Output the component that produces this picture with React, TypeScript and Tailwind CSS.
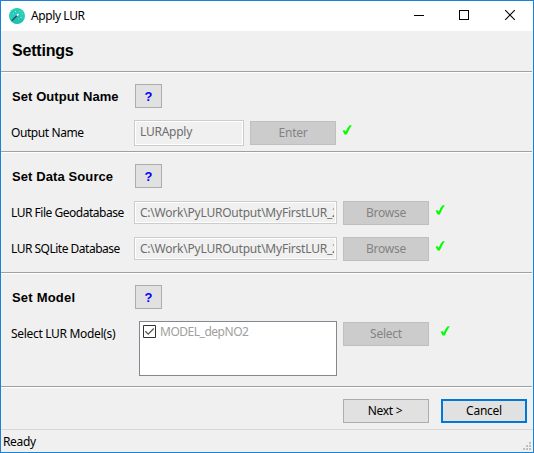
import type { ReactNode } from "react";

function HelpButton() {
  return (
    <button className="flex h-6 w-[27px] items-center justify-center border border-[#adadad] bg-[#e1e1e1] font-['Liberation_Sans',Arial,sans-serif] text-[13px] font-bold leading-none text-[#0000ff]">
      ?
    </button>
  );
}

function SectionTitle({ children, className }: { children: ReactNode; className: string }) {
  return (
    <div className="flex h-6 items-center">
      <h2 className={`w-[123px] shrink-0 whitespace-nowrap pt-0.5 font-['Liberation_Sans',Arial,sans-serif] text-[13px] font-bold leading-6 text-black ${className}`}>
        {children}
      </h2>
      <HelpButton />
    </div>
  );
}

function Label({ children, className }: { children: ReactNode; className: string }) {
  return <span className={`h-6 shrink-0 whitespace-nowrap leading-6 ${className}`}>{children}</span>;
}

function Field({ children, className }: { children: ReactNode; className: string }) {
  return (
    <div className={`shrink-0 border border-[#cccccc] bg-white p-px ${className}`}>
      <div className="h-full bg-[#f0f0f0] pl-1 pr-px">
        <div className="h-full overflow-hidden whitespace-nowrap leading-[19px] text-[#6d6d6d]">{children}</div>
      </div>
    </div>
  );
}

function DisabledButton({ children, className }: { children: ReactNode; className: string }) {
  return (
    <button disabled className={`h-6 w-[86px] shrink-0 border border-[#bfbfbf] bg-[#cccccc] text-center leading-[22px] tracking-[-0.25px] text-[#838383] ${className}`}>
      {children}
    </button>
  );
}

function Tick({ className }: { className: string }) {
  return (
    <svg className={`h-[10px] w-[10px] shrink-0 ${className}`} viewBox="0 0 10 10">
      <path d="M0.6 5.8 L2.4 5 L3.7 6.7 Q5.4 2.4 7.6 0.2 H9.8 Q7 4 4.8 9.4 H2.6 Z" fill="#00ff00" />
    </svg>
  );
}

function Rule() {
  return <div className="mr-px h-0.5 shrink-0 border-b border-t border-b-white border-t-[#a0a0a0]" />;
}

function AppIcon() {
  return (
    <svg className="h-4 w-4" viewBox="0 0 16 16">
      <circle cx="8" cy="8" r="8" fill="#25cdbd" />
      <path d="M3.5 13 L9.5 6.5 L14.5 11.5 A8 8 0 0 1 6 15.6 Z" fill="#20c0b2" />
      <path d="M2.8 12.7 L8 7.5" stroke="#34495e" strokeWidth="1.5" />
      <path d="M7.9 7.6 L9.5 6" stroke="#ffffff" strokeWidth="1.6" />
      <path d="M6 3h1v1H6zM11.5 9h1v1h-1z" fill="#bdebd0" />
      <path d="M10.5 2.8h1v1h-1zM12.5 5.3h1v1h-1zM4 5.5h1v1H4zM9.4 10.6h1v1h-1z" fill="#c9cf6b" />
    </svg>
  );
}

function WindowControls() {
  return (
    <svg className="h-[30px] w-[120px]" viewBox="0 0 120 30" fill="none" stroke="#000000">
      <path d="M1 14.5h10" shapeRendering="crispEdges" />
      <path d="M46.5 9.5h9v9h-9z" shapeRendering="crispEdges" />
      <path d="M92.2 9.2l9.6 9.6M101.8 9.2l-9.6 9.6" strokeWidth="1.1" />
    </svg>
  );
}

export default function App() {
  return (
    <div className="flex h-[453px] w-[534px] flex-col overflow-hidden border border-[#1883d7] bg-[#f0f0f0] font-['Noto_Sans','Open_Sans',sans-serif] text-[12px] text-black">
      <header className="flex h-[30px] shrink-0 items-center bg-white pl-2">
        <AppIcon />
        <span className="ml-[6px] flex-1 whitespace-nowrap leading-[30px] tracking-[-0.4px]">Apply LUR</span>
        <WindowControls />
      </header>

      <h1 className="h-10 shrink-0 pl-[11px] font-['Liberation_Sans',Arial,sans-serif] text-[16px] font-bold leading-[39px] tracking-[-0.2px]">Settings</h1>
      <Rule />

      <section className="h-[78px] shrink-0 pl-[11px] pt-[11px]">
        <SectionTitle className="tracking-[0.08px]">Set Output Name</SectionTitle>
        <div className="-ml-px mt-3 flex">
          <Label className="mt-px w-[123px] tracking-[-0.42px]">Output Name</Label>
          <Field className="h-[26px] w-[110px] tracking-[-0.25px]">LURApply</Field>
          <DisabledButton className="ml-[6px] mt-px">Enter</DisabledButton>
          <Tick className="ml-[6px] mt-[5px]" />
        </div>
      </section>
      <Rule />

      <section className="h-[119px] shrink-0 pl-[11px] pt-[11px]">
        <SectionTitle className="tracking-[0.1px]">Set Data Source</SectionTitle>
        <div className="-ml-px mt-[13px] flex h-6">
          <Label className="w-[123px] tracking-[-0.48px]">LUR File Geodatabase</Label>
          <Field className="h-[23px] w-[203px] tracking-[-0.22px]">C:\Work\PyLUROutput\MyFirstLUR_2</Field>
          <DisabledButton className="ml-[6px]">Browse</DisabledButton>
          <Tick className="ml-[6px] mt-[4px]" />
        </div>
        <div className="-ml-px mt-3 flex h-6">
          <Label className="w-[123px] tracking-[-0.5px]">LUR SQLite Database</Label>
          <Field className="h-[23px] w-[203px] tracking-[-0.22px]">C:\Work\PyLUROutput\MyFirstLUR_2</Field>
          <DisabledButton className="ml-[6px]">Browse</DisabledButton>
          <Tick className="ml-[6px] mt-[4px]" />
        </div>
      </section>
      <Rule />

      <section className="h-[112px] shrink-0 pl-[11px] pt-[11px]">
        <SectionTitle className="tracking-[0.2px]">Set Model</SectionTitle>
        <div className="-ml-px mt-3 flex">
          <Label className="mt-px w-[128px] tracking-[-0.32px]">Select LUR Model(s)</Label>
          <div className="flex h-[55px] w-[198px] shrink-0 border border-[#828790] bg-white pl-[3px] pt-[3px]">
            <svg className="h-[13px] w-[13px]" viewBox="0 0 13 13" fill="none">
              <path d="M0.5 0.5h12v12h-12z" fill="#ffffff" stroke="#333333" />
              <path d="M2.3 6.2l2.9 2.9 5.6-5.6" stroke="#555555" strokeWidth="1.3" />
            </svg>
            <span className="ml-1 whitespace-nowrap leading-[14px] tracking-[-0.48px] text-[#a0a0a0]">MODEL_depNO2</span>
          </div>
          <DisabledButton className="ml-[6px] mt-px">Select</DisabledButton>
          <Tick className="ml-[11px] mt-[5px]" />
        </div>
      </section>
      <Rule />

      <div className="flex h-[41px] shrink-0 justify-end gap-3 pr-[6px] pt-[11px]">
        <button className="h-6 w-[86px] border border-[#adadad] bg-[#e1e1e1] pr-0.5 leading-[22px] tracking-[-0.3px]">Next &gt;</button>
        <button className="h-6 w-[86px] border-2 border-[#0078d7] bg-[#e1e1e1] leading-5 tracking-[-0.25px]">Cancel</button>
      </div>

      <footer className="flex h-[23px] shrink-0 items-end justify-between border-t border-[#d7d7d7] pl-[2px]">
        <span className="h-[22px] leading-[24px] tracking-[-0.35px]">Ready</span>
        <svg className="mb-[2px] mr-[2px] h-2 w-2" viewBox="0 0 8 8" fill="#bfbfbf">
          <path d="M6 0h2v2H6zM3 3h2v2H3zM6 3h2v2H6zM0 6h2v2H0zM3 6h2v2H3zM6 6h2v2H6z" />
        </svg>
      </footer>
    </div>
  );
}
